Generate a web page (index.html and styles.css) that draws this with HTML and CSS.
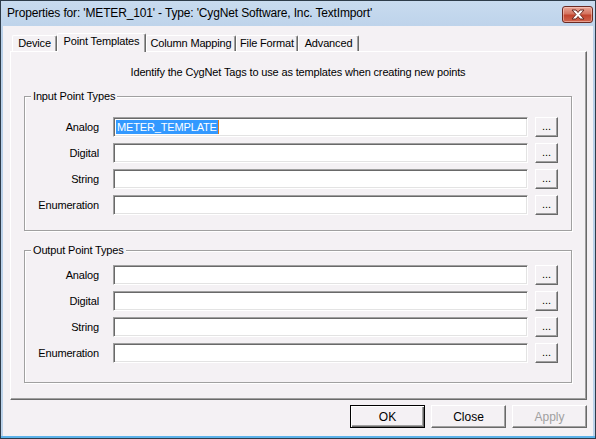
FILE: index.html
```html
<!DOCTYPE html>
<html lang="en">
<head>
    <meta charset="UTF-8">
    <title>Properties</title>
    <link rel="stylesheet" href="styles.css">
</head>
<body>
    <div class="window">
        <div class="titlebar">
            <span class="title">Properties for: 'METER_101' - Type: 'CygNet Software, Inc. TextImport'</span>
            <button class="close-btn" title="Close">
                <svg width="16" height="11" viewBox="0 0 16 11">
                    <path d="M2 1 H6 L8 3.5 L10 1 H14 L10 5.5 L14 10 H10 L8 7.5 L6 10 H2 L6 5.5 Z" fill="#fff" stroke="#6b2a22" stroke-width="1" stroke-linejoin="round"/>
                </svg>
            </button>
        </div>

        <div class="client">
            <div class="tabs">
                <div class="tab tab-device">Device</div>
                <div class="tab tab-templates active">Point Templates</div>
                <div class="tab tab-columns">Column Mapping</div>
                <div class="tab tab-format">File Format</div>
                <div class="tab tab-advanced">Advanced</div>
            </div>

            <div class="panel">
                <p class="intro">Identify the CygNet Tags to use as templates when creating new points</p>

                <div class="group group-input">
                    <div class="group-title">Input Point Types</div>
                    <div class="row">
                        <label>Analog</label>
                        <div class="field"><span class="selected">METER_TEMPLATE</span></div>
                        <button class="browse">...</button>
                    </div>
                    <div class="row">
                        <label>Digital</label>
                        <div class="field"></div>
                        <button class="browse">...</button>
                    </div>
                    <div class="row">
                        <label>String</label>
                        <div class="field"></div>
                        <button class="browse">...</button>
                    </div>
                    <div class="row">
                        <label>Enumeration</label>
                        <div class="field"></div>
                        <button class="browse">...</button>
                    </div>
                </div>

                <div class="group group-output">
                    <div class="group-title">Output Point Types</div>
                    <div class="row">
                        <label>Analog</label>
                        <div class="field"></div>
                        <button class="browse">...</button>
                    </div>
                    <div class="row">
                        <label>Digital</label>
                        <div class="field"></div>
                        <button class="browse">...</button>
                    </div>
                    <div class="row">
                        <label>String</label>
                        <div class="field"></div>
                        <button class="browse">...</button>
                    </div>
                    <div class="row">
                        <label>Enumeration</label>
                        <div class="field"></div>
                        <button class="browse">...</button>
                    </div>
                </div>
            </div>

            <div class="actions">
                <button class="btn default">OK</button>
                <button class="btn">Close</button>
                <button class="btn" disabled>Apply</button>
            </div>
        </div>
    </div>
</body>
</html>
```

FILE: styles.css
```css
* {
    box-sizing: border-box;
}
body {
    margin: 0;
    font-family: "Liberation Sans", Arial, sans-serif;
    font-size: 11px;
    letter-spacing: -0.15px;
    color: #000;
    background-color: #c3d7ec;
}
.window {
    width: 596px;
    height: 439px;
    display: flex;
    flex-direction: column;
    border: 1px solid #2e3c4a;
    background: linear-gradient(#c8dbef, #b8cfe8 40px, #bcd3ea);
    box-shadow: inset 0 -2px 0 #5db3ea;
}
.titlebar {
    height: 25px;
    display: flex;
    align-items: center;
    justify-content: space-between;
    padding: 0 2px 1px 6px;
}
.title {
    font-size: 12px;
    letter-spacing: -0.15px;
    color: #000;
}
.close-btn {
    width: 31px;
    height: 17px;
    margin-top: 2px;
    padding: 0;
    display: flex;
    align-items: center;
    justify-content: center;
    border: 1px solid #6b2a22;
    border-radius: 3px;
    background: linear-gradient(#e9a596, #d47460 45%, #c2452f 55%, #d0654e);
    box-shadow: inset 0 0 0 1px rgba(255, 220, 210, 0.5);
}
.client {
    flex: 1;
    margin: 0 2px 2px 2px;
    padding: 7px 0 0 7px;
    background-color: #f4f1f4;
    display: flex;
    flex-direction: column;
}
.tabs {
    display: flex;
    align-items: flex-end;
    height: 18px;
    padding-left: 2px;
    position: relative;
    z-index: 1;
}
.tab {
    height: 16px;
    padding-top: 1px;
    text-align: center;
    border-top: 1px solid #fff;
    border-left: 1px solid #fff;
    border-right: 1px solid #696969;
    box-shadow: inset -1px 0 0 #a0a0a0;
    border-radius: 2px 2px 0 0;
    background-color: #f4f1f4;
    white-space: nowrap;
}
.tab-device { width: 45px; }
.tab-templates { width: 89px; }
.tab-columns { width: 90px; }
.tab-format { width: 62px; }
.tab-advanced { width: 61px; }
.tab.active {
    height: 19px;
    margin-bottom: -1px;
    padding-top: 1px;
}
.panel {
    width: 577px;
    height: 349px;
    border-top: 1px solid #fff;
    border-left: 1px solid #fff;
    border-right: 1px solid #696969;
    border-bottom: 1px solid #696969;
    box-shadow: inset -1px -1px 0 #a0a0a0;
    padding: 0 14px 0 13px;
}
.intro {
    margin: 14px 0 17px;
    text-align: center;
    line-height: 13px;
}
.group {
    border: 1px solid #a0a0a0;
    box-shadow: 1px 1px 0 #fff, inset 1px 1px 0 #fff;
    padding: 0 13px 15px 0;
}
.group-title {
    display: table;
    margin: -7px 0 14px 6px;
    padding: 0 2px;
    line-height: 13px;
    background-color: #f4f1f4;
}
.group-output {
    margin-top: 19px;
    padding-bottom: 19px;
}
.group-output .group-title {
    margin-bottom: 8px;
}
.row {
    display: flex;
    align-items: center;
    height: 20px;
    margin-bottom: 6px;
}
.row:last-child {
    margin-bottom: 0;
}
.row label {
    width: 74px;
    margin-right: 14px;
    text-align: right;
}
.field {
    flex: 1;
    height: 20px;
    background-color: #fff;
    border-top: 1px solid #a0a0a0;
    border-left: 1px solid #a0a0a0;
    border-bottom: 1px solid #fff;
    border-right: 1px solid #fff;
    box-shadow: inset 1px 1px 0 #696969, inset -1px -1px 0 #e3e3e3;
    padding: 2px 0 0 2px;
    line-height: 14px;
}
.selected {
    display: inline-block;
    background-color: #3399ff;
    color: #fff;
    padding: 0 1px;
    border-right: 1px solid #e07a1a;
}
.browse, .btn {
    font-family: "Liberation Sans", Arial, sans-serif;
    font-size: 11px;
    color: #000;
    background-color: #f4f1f4;
    border-top: 1px solid #fff;
    border-left: 1px solid #fff;
    border-right: 1px solid #696969;
    border-bottom: 1px solid #696969;
    box-shadow: inset -1px -1px 0 #a0a0a0;
    padding: 0;
}
.browse {
    width: 23px;
    height: 20px;
    margin-left: 7px;
    padding-bottom: 2px;
}
.actions {
    display: flex;
    justify-content: flex-end;
    gap: 6px;
    padding: 5px 6px 0 0;
}
.btn {
    width: 75px;
    height: 23px;
    font-size: 12px;
}
.btn.default {
    border: 1px solid #000;
    box-shadow: inset 1px 1px 0 #fff, inset -1px -1px 0 #696969, inset -2px -2px 0 #a0a0a0;
}
.btn:disabled {
    color: #a0a0a0;
}
```
